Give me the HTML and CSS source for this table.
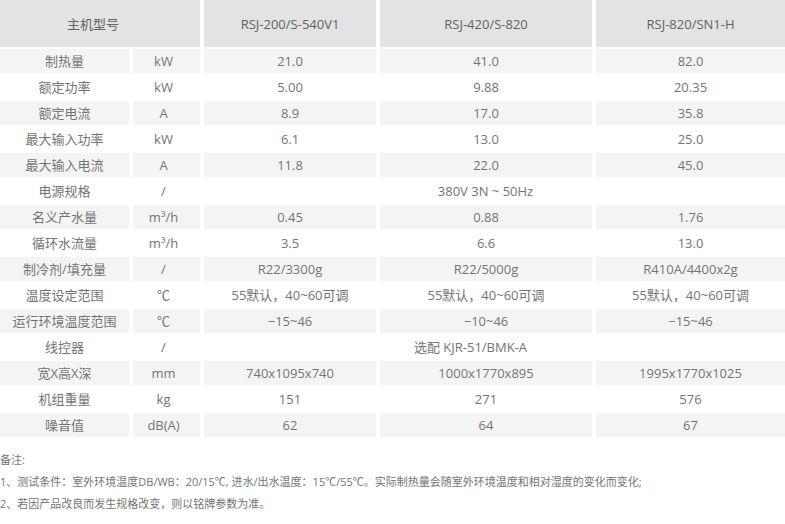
FILE: index.html
```html
<!DOCTYPE html>
<html lang="zh-CN">
<head>
<meta charset="utf-8">
<title>主机参数</title>
<link rel="stylesheet" href="styles.css">
</head>
<body>
<table class="spec">
  <colgroup>
    <col class="c-label"><col class="c-unit"><col class="c-a"><col class="c-b"><col class="c-c">
  </colgroup>
  <thead>
    <tr><th colspan="2" class="th-model">主机型号</th><th>RSJ-200/S-540V1</th><th>RSJ-420/S-820</th><th>RSJ-820/SN1-H</th></tr>
  </thead>
  <tbody>
    <tr class="g"><td>制热量</td><td>kW</td><td>21.0</td><td>41.0</td><td>82.0</td></tr>
    <tr><td>额定功率</td><td>kW</td><td>5.00</td><td>9.88</td><td>20.35</td></tr>
    <tr class="g"><td>额定电流</td><td>A</td><td>8.9</td><td>17.0</td><td>35.8</td></tr>
    <tr><td>最大输入功率</td><td>kW</td><td>6.1</td><td>13.0</td><td>25.0</td></tr>
    <tr class="g"><td>最大输入电流</td><td>A</td><td>11.8</td><td>22.0</td><td>45.0</td></tr>
    <tr><td>电源规格</td><td>/</td><td colspan="3" class="span-power">380V 3N ~ 50Hz</td></tr>
    <tr class="g"><td>名义产水量</td><td>m³/h</td><td>0.45</td><td>0.88</td><td>1.76</td></tr>
    <tr><td>循环水流量</td><td>m³/h</td><td>3.5</td><td>6.6</td><td>13.0</td></tr>
    <tr class="g"><td>制冷剂/填充量</td><td>/</td><td>R22/3300g</td><td>R22/5000g</td><td>R410A/4400x2g</td></tr>
    <tr><td>温度设定范围</td><td>℃</td><td>55默认，40~60可调</td><td>55默认，40~60可调</td><td>55默认，40~60可调</td></tr>
    <tr class="g"><td>运行环境温度范围</td><td>℃</td><td>−15~46</td><td>−10~46</td><td>−15~46</td></tr>
    <tr><td>线控器</td><td>/</td><td colspan="3" class="span-ctrl">选配 KJR-51/BMK-A</td></tr>
    <tr class="g"><td>宽X高X深</td><td>mm</td><td>740x1095x740</td><td>1000x1770x895</td><td>1995x1770x1025</td></tr>
    <tr><td>机组重量</td><td>kg</td><td>151</td><td>271</td><td>576</td></tr>
    <tr class="g"><td>噪音值</td><td>dB(A)</td><td>62</td><td>64</td><td>67</td></tr>
  </tbody>
</table>
<div class="notes">
  <p>备注:</p>
  <p>1、测试条件：室外环境温度DB/WB：20/15℃, 进水/出水温度：15℃/55℃。实际制热量会随室外环境温度和相对湿度的变化而变化;</p>
  <p>2、若因产品改良而发生规格改变，则以铭牌参数为准。</p>
</div>
</body>
</html>
```

FILE: styles.css
```css
html, body {
  margin: 0;
  padding: 0;
  background: #fff;
}
body {
  font-family: "Open Sans", "Noto Sans CJK SC", sans-serif;
  color: #747474;
  overflow: hidden;
}
.spec {
  table-layout: fixed;
  width: 793px;
  border-collapse: separate;
  border-spacing: 4px 2px;
  margin: -2px -4px 0;
  font-size: 13px;
}
.c-label { width: 129px; }
.c-unit { width: 67px; }
.c-a { width: 172px; }
.c-b { width: 212px; }
.c-c { width: 189px; }
.spec th {
  height: 47px;
  padding: 0;
  background: #e3e3e3;
  font-weight: normal;
  color: #626262;
  text-align: center;
}
.spec .th-model { padding-right: 14px; }
.spec td {
  height: 24px;
  padding: 0;
  text-align: center;
  white-space: nowrap;
  line-height: 24px;
}
.spec tr.g td { background: #f4f4f4; }
.spec td:nth-child(2) { padding-right: 6px; }
.spec .span-power { padding-right: 18px; }
.spec .span-ctrl { padding-right: 48px; }
.notes {
  margin-top: 10px;
  font-size: 11px;
  line-height: 22px;
  color: #747474;
}
.notes p { margin: 0; }
```
